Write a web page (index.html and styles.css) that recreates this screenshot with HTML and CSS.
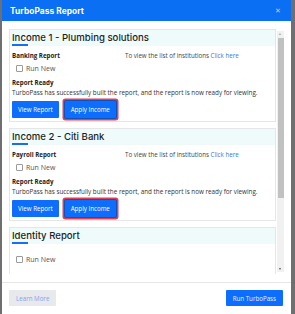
FILE: index.html
```html
<!DOCTYPE html>
<html>
<head>
<meta charset="utf-8">
<link rel="stylesheet" href="styles.css">
</head>
<body>
<div class="modal">
  <div class="modal-header">
    <span class="modal-title">TurboPass Report</span>
    <span class="close">&#x2715;</span>
  </div>
  <div class="modal-body">
    <div class="scroll-content">
      <div class="card">
        <div class="card-header"><div class="card-title">Income 1 - Plumbing solutions</div></div>
        <div class="card-body">
          <div class="row1">
            <span class="label">Banking Report</span>
            <span class="info">To view the list of institutions <span class="link">Click here</span></span>
          </div>
          <div class="check-row"><span class="box"></span><span>Run New</span></div>
          <div class="label ready">Report Ready</div>
          <div class="desc">TurboPass has successfully built the report, and the report is now ready for viewing.</div>
          <div class="btns">
            <span class="btn">View Report</span>
            <span class="btn btn-hl">Apply Income</span>
          </div>
        </div>
      </div>
      <div class="card">
        <div class="card-header"><div class="card-title">Income 2 - Citi Bank</div></div>
        <div class="card-body">
          <div class="row1">
            <span class="label">Payroll Report</span>
            <span class="info">To view the list of institutions <span class="link">Click here</span></span>
          </div>
          <div class="check-row"><span class="box"></span><span>Run New</span></div>
          <div class="label ready">Report Ready</div>
          <div class="desc">TurboPass has successfully built the report, and the report is now ready for viewing.</div>
          <div class="btns">
            <span class="btn">View Report</span>
            <span class="btn btn-hl">Apply Income</span>
          </div>
        </div>
      </div>
      <div class="card">
        <div class="card-header"><div class="card-title">Identity Report</div></div>
        <div class="card-body">
          <div class="check-row solo"><span class="box"></span><span>Run New</span></div>
          <div class="spacer"></div>
        </div>
      </div>
    </div>
    <div class="scrollbar">
      <div class="arrow up"></div>
      <div class="thumb"></div>
      <div class="track-rest"></div>
      <div class="arrow down"></div>
    </div>
  </div>
  <div class="modal-footer">
    <span class="fbtn learn">Learn More</span>
    <span class="fbtn run">Run TurboPass</span>
  </div>
</div>
</body>
</html>
```

FILE: styles.css
```css
html, body {
  margin: 0;
  padding: 0;
}
body {
  background: #6f6f71;
  width: 295px;
  height: 314px;
  overflow: hidden;
  font-family: "Open Sans", "Liberation Sans", sans-serif;
}
.modal {
  margin-left: 2px;
  width: 289px;
  height: 314px;
  background: #fff;
  display: flex;
  flex-direction: column;
}
.modal-header {
  height: 21px;
  background: #0b6ff4;
  display: flex;
  align-items: center;
  justify-content: space-between;
  padding: 0 10px 0 8px;
  flex: none;
}
.modal-title {
  color: #fff;
  font-family: "Inter", "Noto Sans", sans-serif;
  font-weight: 700;
  font-size: 8.4px;
  letter-spacing: 0.05px;
}
.close {
  color: #b8d2fb;
  font-size: 6.5px;
}
.modal-body {
  display: flex;
  padding: 8px 7px 0 7px;
  height: 245px;
  flex: none;
}
.scroll-content {
  flex: 1;
  overflow: hidden;
  height: 245px;
}
.scrollbar {
  width: 7px;
  margin-left: 1px;
  margin-top: 2px;
  height: 241px;
  background: #f1f1f1;
  display: flex;
  flex-direction: column;
}
.arrow {
  height: 7px;
  position: relative;
}
.arrow::before {
  content: "";
  position: absolute;
  left: 2px;
  width: 0;
  height: 0;
  border-left: 1.5px solid transparent;
  border-right: 1.5px solid transparent;
}
.arrow.up::before {
  top: 2px;
  border-bottom: 2px solid #a0a0a0;
}
.arrow.down::before {
  top: 3px;
  border-top: 2px solid #505050;
}
.thumb {
  height: 160px;
  background: #c1c1c1;
  margin: 0 0.5px;
}
.track-rest {
  flex: 1;
}
.card {
  border: 1px solid #e4e6e8;
  background: #fff;
  margin-bottom: 6px;
}
.card-header {
  background: #effbfb;
  height: 16px;
  padding: 3px 2px 0 2px;
  box-sizing: border-box;
}
.card-title {
  font-family: "Inter", "Noto Sans", sans-serif;
  font-weight: 500;
  font-size: 9.6px;
  line-height: 10px;
  color: #1e1e1e;
  position: relative;
}
.card-title::after {
  content: "";
  display: block;
  width: 16px;
  height: 2px;
  background: #1a6ff0;
  margin-top: 1px;
}
.card-body {
  padding: 0 2px 3px 2px;
}
.row1 {
  display: grid;
  grid-template-columns: 113px 1fr;
  margin-top: 5px;
  line-height: 9px;
}
.label {
  font-weight: 700;
  font-size: 6.2px;
  color: #222;
}
.info {
  font-size: 6.2px;
  color: #444;
}
.link {
  color: #2b7de9;
}
.check-row {
  display: flex;
  align-items: center;
  margin-top: 4px;
  height: 9px;
  padding-left: 4px;
  font-size: 7px;
  color: #555;
}
.check-row.solo {
  margin-top: 11px;
}
.box {
  width: 5px;
  height: 5px;
  border: 0.8px solid #9a9a9a;
  border-radius: 1px;
  margin-right: 3px;
  background: #fff;
}
.ready {
  margin-top: 5px;
  line-height: 9px;
}
.desc {
  margin-top: 1px;
  line-height: 9px;
  font-size: 6.3px;
  color: #333;
  white-space: nowrap;
}
.btns {
  display: flex;
  margin-top: 4px;
}
.btn {
  height: 17px;
  display: flex;
  align-items: center;
  justify-content: center;
  background: #0d6efd;
  color: #fff;
  font-size: 6.2px;
  padding: 0 6px;
  border-radius: 1px;
}
.btn-hl {
  margin-left: 6px;
  box-shadow: 0 0 0 1px #1452b8, 0 0 0 2.5px #e2404f;
}
.spacer {
  height: 30px;
}
.modal-footer {
  border-top: 1px solid #e6e6e6;
  margin-top: 8px;
  flex: 1;
  display: flex;
  justify-content: space-between;
  align-items: flex-start;
  padding: 7px 8px 0 7px;
}
.fbtn {
  height: 16px;
  display: flex;
  align-items: center;
  padding: 0 7px;
  font-size: 6.2px;
  border-radius: 1px;
}
.learn {
  background: #e7e9ec;
  color: #7ea6ea;
}
.run {
  background: #0d6efd;
  color: #e6efff;
}
```
